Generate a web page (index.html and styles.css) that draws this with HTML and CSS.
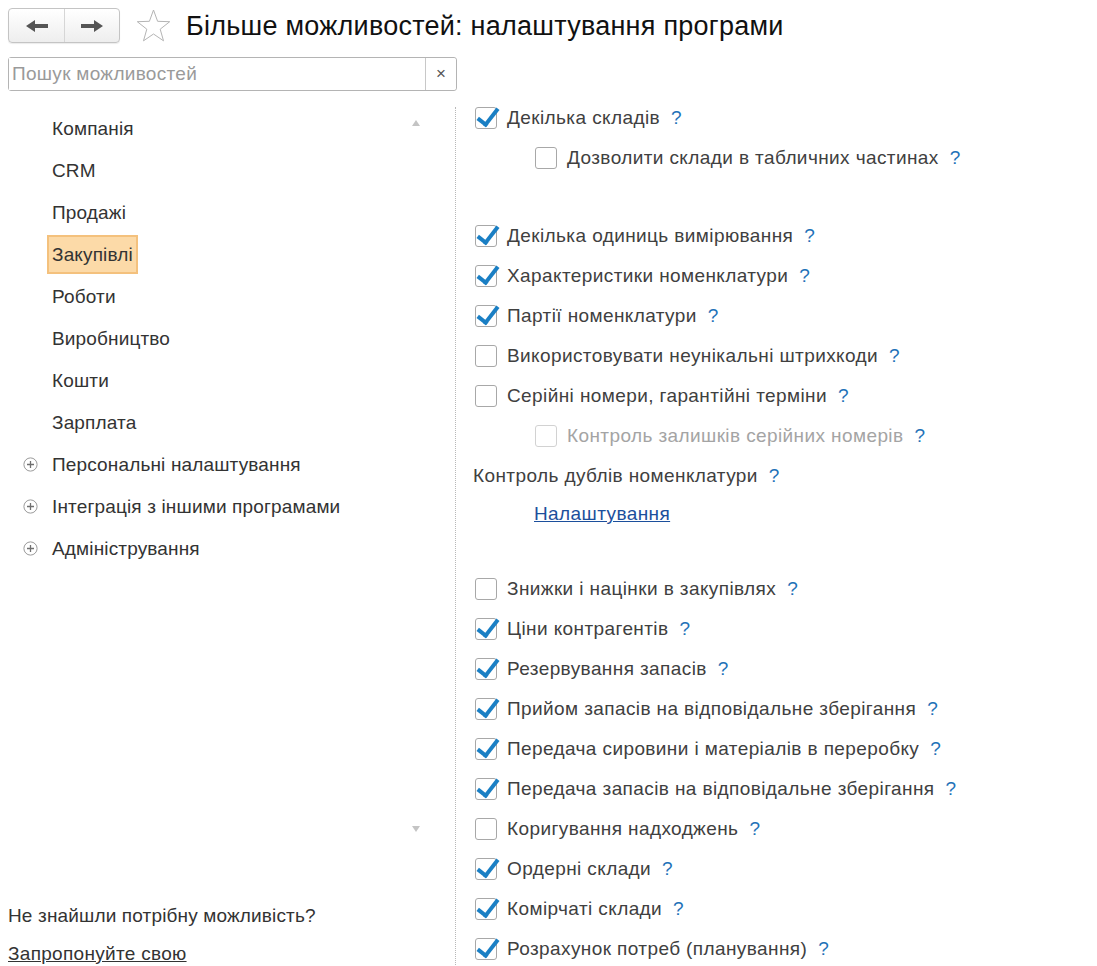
FILE: index.html
```html
<!DOCTYPE html>
<html lang="uk">
<head>
  <meta charset="UTF-8">
  <title>Більше можливостей: налаштування програми</title>
  <link rel="stylesheet" href="styles.css">
</head>
<body>
  <div class="top">
    <div class="nav-btns">
      <button class="nav-btn">
        <svg width="22" height="12" viewBox="0 0 22 12"><path d="M0 6 L9 0 L9 4 L22 4 L22 8 L9 8 L9 12 Z" fill="#555"/></svg>
      </button>
      <button class="nav-btn">
        <svg width="22" height="12" viewBox="0 0 22 12"><path d="M22 6 L13 0 L13 4 L0 4 L0 8 L13 8 L13 12 Z" fill="#555"/></svg>
      </button>
    </div>
    <svg class="star" width="35" height="34" viewBox="0 0 35 34">
      <polygon points="17.5,1 21.6,12.3 33.7,12.7 24.2,20.2 27.5,31.8 17.5,25 7.5,31.8 10.8,20.2 1.3,12.7 13.4,12.3" fill="none" stroke="#b4b4b4" stroke-width="1"/>
    </svg>
    <h1 class="title">Більше можливостей: налаштування програми</h1>
  </div>

  <div class="search">
    <input class="search-input" type="text" placeholder="Пошук можливостей">
    <button class="search-clear">×</button>
  </div>

  <div class="main">
    <div class="side">
      <div class="side-panel">
        <ul class="sections">
          <li class="section"><span class="gutter"></span><span class="section-name">Компанія</span></li>
          <li class="section"><span class="gutter"></span><span class="section-name">CRM</span></li>
          <li class="section"><span class="gutter"></span><span class="section-name">Продажі</span></li>
          <li class="section"><span class="gutter"></span><span class="section-name current">Закупівлі</span></li>
          <li class="section"><span class="gutter"></span><span class="section-name">Роботи</span></li>
          <li class="section"><span class="gutter"></span><span class="section-name">Виробництво</span></li>
          <li class="section"><span class="gutter"></span><span class="section-name">Кошти</span></li>
          <li class="section"><span class="gutter"></span><span class="section-name">Зарплата</span></li>
          <li class="section"><span class="gutter"><svg width="15" height="15" viewBox="0 0 15 15"><circle cx="7.5" cy="7.5" r="6.6" fill="#fff" stroke="#9a9a9a"/><path d="M4 7.5 H11 M7.5 4 V11" stroke="#707070" stroke-width="1.3"/></svg></span><span class="section-name">Персональні налаштування</span></li>
          <li class="section"><span class="gutter"><svg width="15" height="15" viewBox="0 0 15 15"><circle cx="7.5" cy="7.5" r="6.6" fill="#fff" stroke="#9a9a9a"/><path d="M4 7.5 H11 M7.5 4 V11" stroke="#707070" stroke-width="1.3"/></svg></span><span class="section-name">Інтеграція з іншими програмами</span></li>
          <li class="section"><span class="gutter"><svg width="15" height="15" viewBox="0 0 15 15"><circle cx="7.5" cy="7.5" r="6.6" fill="#fff" stroke="#9a9a9a"/><path d="M4 7.5 H11 M7.5 4 V11" stroke="#707070" stroke-width="1.3"/></svg></span><span class="section-name">Адміністрування</span></li>
        </ul>
        <div class="scroll">
          <span class="arrow-up"></span>
          <span class="arrow-down"></span>
        </div>
      </div>
      <div class="suggest">
        <p class="suggest-text">Не знайшли потрібну можливість?</p>
        <a class="suggest-link" href="#">Запропонуйте свою</a>
      </div>
    </div>

    <div class="options">
      <div class="opt"><span class="cb checked"></span>Декілька складів<span class="help">?</span></div>
      <div class="opt nested"><span class="cb"></span>Дозволити склади в табличних частинах<span class="help">?</span></div>
      <div class="spacer"></div>
      <div class="opt"><span class="cb checked"></span>Декілька одиниць вимірювання<span class="help">?</span></div>
      <div class="opt"><span class="cb checked"></span>Характеристики номенклатури<span class="help">?</span></div>
      <div class="opt"><span class="cb checked"></span>Партії номенклатури<span class="help">?</span></div>
      <div class="opt"><span class="cb"></span>Використовувати неунікальні штрихкоди<span class="help">?</span></div>
      <div class="opt"><span class="cb"></span>Серійні номери, гарантійні терміни<span class="help">?</span></div>
      <div class="opt nested disabled"><span class="cb"></span>Контроль залишків серійних номерів<span class="help">?</span></div>
      <div class="opt plain">Контроль дублів номенклатури<span class="help">?</span></div>
      <div class="opt link-row"><a class="settings-link" href="#">Налаштування</a></div>
      <div class="spacer short"></div>
      <div class="opt"><span class="cb"></span>Знижки і націнки в закупівлях<span class="help">?</span></div>
      <div class="opt"><span class="cb checked"></span>Ціни контрагентів<span class="help">?</span></div>
      <div class="opt"><span class="cb checked"></span>Резервування запасів<span class="help">?</span></div>
      <div class="opt"><span class="cb checked"></span>Прийом запасів на відповідальне зберігання<span class="help">?</span></div>
      <div class="opt"><span class="cb checked"></span>Передача сировини і матеріалів в переробку<span class="help">?</span></div>
      <div class="opt"><span class="cb checked"></span>Передача запасів на відповідальне зберігання<span class="help">?</span></div>
      <div class="opt"><span class="cb"></span>Коригування надходжень<span class="help">?</span></div>
      <div class="opt"><span class="cb checked"></span>Ордерні склади<span class="help">?</span></div>
      <div class="opt"><span class="cb checked"></span>Комірчаті склади<span class="help">?</span></div>
      <div class="opt"><span class="cb checked"></span>Розрахунок потреб (планування)<span class="help">?</span></div>
    </div>
  </div>
</body>
</html>
```

FILE: styles.css
```css
body {
  margin: 0;
  font-family: "Liberation Sans", Arial, sans-serif;
  font-size: 19px;
  color: #404040;
  background: #fff;
  overflow: hidden;
}

/* header */
.top {
  display: flex;
  align-items: center;
  padding: 8px 0 0 8px;
  height: 35px;
}

.nav-btns {
  display: flex;
  height: 35px;
  border: 1px solid #c4c4c4;
  border-radius: 4px;
  box-sizing: border-box;
  background: linear-gradient(#ffffff, #eeeeee);
  box-shadow: 0 1px 1px rgba(0, 0, 0, 0.08);
}

.nav-btn {
  width: 55px;
  border: none;
  background: transparent;
  padding: 0;
  display: flex;
  align-items: center;
  justify-content: center;
}

.nav-btn + .nav-btn {
  border-left: 1px solid #d6d6d6;
}

.star {
  margin-left: 16px;
  margin-top: 1px;
}

.title {
  margin: 2px 0 0 15px;
  font-size: 27px;
  letter-spacing: 0.25px;
  font-weight: normal;
  color: #111;
}

/* search */
.search {
  display: flex;
  margin: 14px 0 0 8px;
  width: 449px;
  height: 34px;
  border: 1px solid #b4b4b4;
  border-radius: 3px;
  box-sizing: border-box;
}

.search-input {
  flex: 1;
  border: none;
  outline: none;
  padding: 0 0 0 3px;
  font-family: inherit;
  font-size: 19px;
  letter-spacing: 0.3px;
  color: #333;
}

.search-input::placeholder {
  color: #9a9a9a;
}

.search-clear {
  width: 31px;
  border: none;
  border-left: 1px solid #c8c8c8;
  background: #fff;
  color: #555;
  font-size: 17px;
  padding: 0;
  border-radius: 0 3px 3px 0;
}

/* main */
.main {
  display: flex;
  align-items: flex-start;
  margin-top: 7px;
}

.side {
  width: 455px;
  margin-top: 9px;
  border-right: 1px dotted #b8b8b8;
  height: 880px;
  letter-spacing: 0.15px;
}

.side-panel {
  display: flex;
  height: 790px;
  padding-right: 35px;
}

.sections {
  list-style: none;
  margin: 0;
  padding: 0;
  flex: 1;
}

.section {
  display: flex;
  align-items: center;
  height: 42px;
  color: #333;
}

.gutter {
  width: 47px;
  padding-left: 23px;
  box-sizing: border-box;
  display: flex;
  align-items: center;
}

.section-name {
  display: inline-block;
  height: 39px;
  line-height: 35px;
  padding: 0 3px;
  border: 2px solid transparent;
  box-sizing: border-box;
}

.section-name.current {
  background: #fcdaa8;
  border-color: #f4c17d;
}

.scroll {
  width: 8px;
  height: 738px;
  display: flex;
  flex-direction: column;
  justify-content: space-between;
  padding: 13px 0;
  box-sizing: border-box;
}

.arrow-up {
  width: 0;
  height: 0;
  border-left: 4px solid transparent;
  border-right: 4px solid transparent;
  border-bottom: 6px solid #c4c4c4;
}

.arrow-down {
  width: 0;
  height: 0;
  border-left: 4px solid transparent;
  border-right: 4px solid transparent;
  border-top: 6px solid #c4c4c4;
}

.suggest {
  padding-left: 8px;
}

.suggest-text {
  margin: 0;
  line-height: 38px;
  color: #333;
}

.suggest-link {
  display: block;
  line-height: 38px;
  color: #333;
  letter-spacing: 0.3px;
  text-decoration: underline;
}

/* options */
.options {
  flex: 1;
  padding-left: 19px;
  letter-spacing: 0.4px;
}

.opt {
  display: flex;
  align-items: center;
  height: 40px;
  white-space: nowrap;
}

.opt.nested {
  padding-left: 60px;
}

.opt.disabled {
  color: #a4a4a4;
}

.opt.disabled .cb {
  border-color: #d2d2d2;
}

.opt.plain {
  margin-left: -2px;
}

.opt.link-row {
  height: 36px;
  padding-left: 59px;
}

.spacer {
  height: 38px;
}

.spacer.short {
  height: 37px;
}

.cb {
  position: relative;
  width: 22px;
  height: 22px;
  border: 1px solid #a8a8a8;
  border-radius: 3px;
  box-sizing: border-box;
  margin-right: 10px;
  background: #fff;
  flex-shrink: 0;
}

.cb.checked::after {
  content: "";
  position: absolute;
  left: 6px;
  top: -4px;
  width: 8px;
  height: 18px;
  border-right: 4px solid #1a7fc4;
  border-bottom: 4px solid #1a7fc4;
  transform: rotate(38deg);
}

.help {
  margin-left: 11px;
  color: #1f72b8;
}

.settings-link {
  color: #1c4f9c;
  text-decoration: underline;
}
```
